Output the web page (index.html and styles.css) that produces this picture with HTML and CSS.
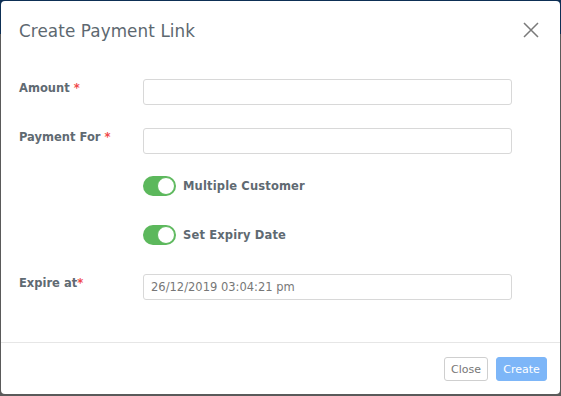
FILE: index.html
```html
<!DOCTYPE html>
<html>
<head>
<meta charset="utf-8">
<link rel="stylesheet" href="styles.css">
</head>
<body>
<div class="modal">
  <div class="modal-header">
    <h2 class="modal-title">Create Payment Link</h2>
    <button class="close-x" aria-label="Close">
      <svg width="16" height="16" viewBox="0 0 16 16"><path d="M1 1 L15 15 M15 1 L1 15" stroke="#7a7a7a" stroke-width="1.5" fill="none"/></svg>
    </button>
  </div>
  <div class="modal-body">
    <div class="row">
      <label class="label">Amount <span class="req">*</span></label>
      <input class="input" type="text">
    </div>
    <div class="row">
      <label class="label">Payment For <span class="req">*</span></label>
      <input class="input" type="text">
    </div>
    <div class="row toggle-row">
      <div class="label"></div>
      <div class="toggle-wrap"><span class="toggle"><span class="knob"></span></span><span class="toggle-label">Multiple Customer</span></div>
    </div>
    <div class="row toggle-row">
      <div class="label"></div>
      <div class="toggle-wrap"><span class="toggle"><span class="knob"></span></span><span class="toggle-label">Set Expiry Date</span></div>
    </div>
    <div class="row">
      <label class="label">Expire at<span class="req">*</span></label>
      <input class="input" type="text" value="26/12/2019 03:04:21 pm">
    </div>
  </div>
  <div class="modal-footer">
    <button class="btn btn-close">Close</button>
    <button class="btn btn-create">Create</button>
  </div>
</div>
</body>
</html>
```
FILE: styles.css
```css
html, body { margin: 0; padding: 0; }
body {
  width: 561px;
  height: 396px;
  background: linear-gradient(#0d2f55 0, #0d2f55 34px, #5a5a5a 34px, #5a5a5a 100%);
  font-family: "DejaVu Sans", "Open Sans", sans-serif;
  padding: 1px 1px 1px 1px;
  box-sizing: border-box;
  overflow: hidden;
}
.modal {
  background: #fff;
  border-radius: 4px;
  width: 559px;
  height: 393px;
  display: flex;
  flex-direction: column;
}
.modal-header {
  height: 60px;
  display: flex;
  align-items: center;
  justify-content: space-between;
  padding: 0 21px 0 18px;
  flex-shrink: 0;
}
.modal-title {
  margin: 0;
  font-size: 16.8px;
  font-weight: 500;
  color: #5d6870;
  letter-spacing: 0.1px;
}
.close-x {
  border: 0;
  background: none;
  padding: 0;
  width: 16px;
  height: 16px;
  display: flex;
  margin-top: -3px;
}
.modal-body {
  flex: 1;
  padding: 18px 48px 0 18px;
  display: flex;
  flex-direction: column;
  gap: 23px;
}
.row {
  display: flex;
  align-items: flex-start;
  height: 26px;
}
.label {
  width: 124px;
  flex-shrink: 0;
  font-size: 11.5px;
  font-weight: bold;
  color: #5f6a72;
  padding-top: 2px;
}
.req { color: #f0494b; }
.input {
  flex: 1;
  height: 26px;
  box-sizing: border-box;
  border: 1px solid #d8d8d8;
  border-radius: 3px;
  padding: 0 7px;
  font-family: inherit;
  font-size: 11.5px;
  color: #777;
  outline: none;
}
.toggle-row {
  height: 25.5px;
  align-items: flex-start;
}
.toggle-wrap {
  display: flex;
  align-items: center;
  gap: 7px;
  margin-top: -1px;
}
.toggle {
  width: 33px;
  height: 20px;
  border-radius: 10px;
  background: #5cb85c;
  position: relative;
  box-sizing: border-box;
}
.knob {
  position: absolute;
  right: 1px;
  top: 1px;
  width: 18px;
  height: 18px;
  box-sizing: border-box;
  border-radius: 50%;
  background: #fff;
  border: 1px solid #5cb85c;
}
.toggle-label {
  font-size: 11.5px;
  font-weight: bold;
  color: #5f6a72;
  letter-spacing: 0.15px;
}
.modal-footer {
  height: 52px;
  border-top: 1px solid #e6e6e6;
  display: flex;
  justify-content: flex-end;
  align-items: flex-start;
  gap: 8px;
  padding: 14px 13px 0 0;
  box-sizing: border-box;
  flex-shrink: 0;
}
.btn {
  height: 24px;
  border-radius: 3px;
  font-family: inherit;
  font-size: 11px;
  padding: 0 5px;
  cursor: pointer;
}
.btn-close {
  background: #fff;
  border: 1px solid #cfcfcf;
  color: #777;
  width: 44px;
}
.btn-create {
  background: #7db6f8;
  border: 1px solid #7db6f8;
  color: #fff;
  width: 51px;
}
```
